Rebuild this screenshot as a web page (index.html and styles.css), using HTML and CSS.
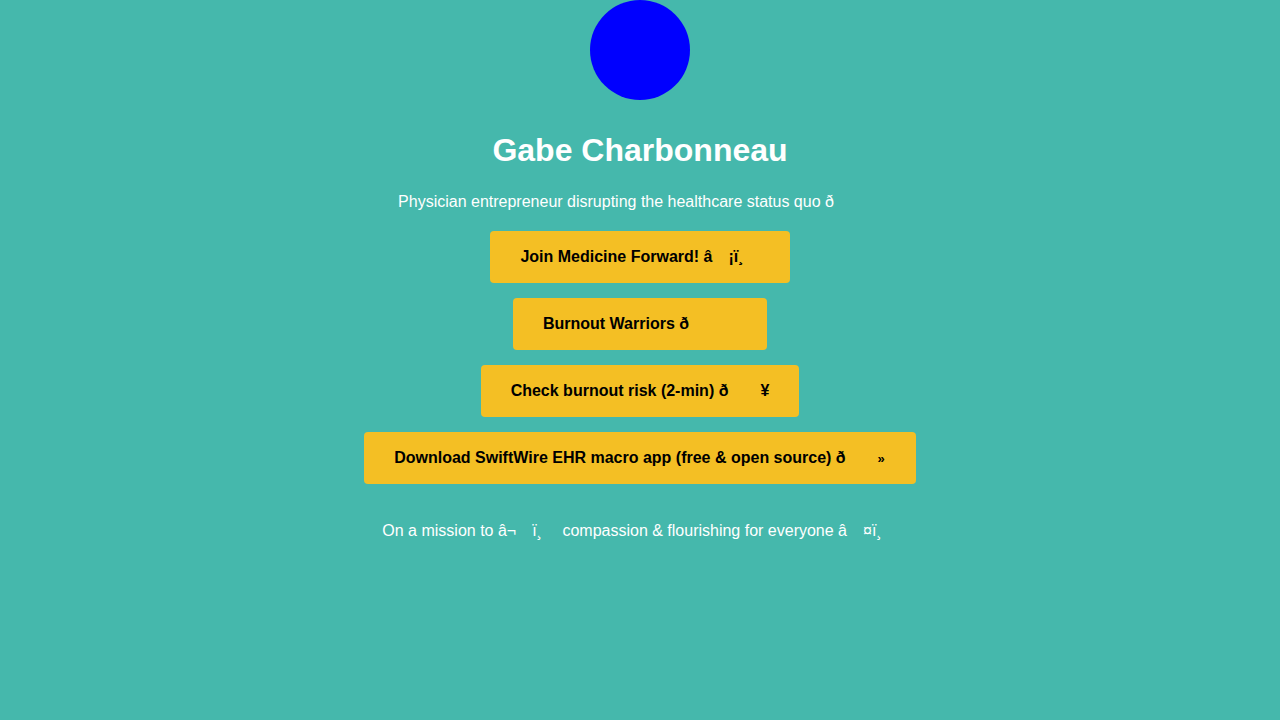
FILE: index.html
```html
<!DOCTYPE html>
<html lang="en">
<head>
<meta charset="utf-8">
<title>Gabe Charbonneau</title>
<link rel="stylesheet" href="styles.css">
</head>
<body>
<main class="page">
  <div class="avatar"></div>
  <h1 class="name">Gabe Charbonneau</h1>
  <p class="bio">Physician entrepreneur disrupting the healthcare status quo ð<span class="ctl"></span><span class="ctl"></span><span class="ctl"></span></p>
  <nav class="links">
    <a class="btn" href="#">Join Medicine Forward! â<span class="ctl"></span>¡ï¸<span class="ctl"></span></a>
    <a class="btn" href="#">Burnout Warriors ð<span class="ctl"></span><span class="ctl"></span><span class="ctl"></span></a>
    <a class="btn" href="#">Check burnout risk (2-min) ð<span class="ctl"></span><span class="ctl"></span>¥</a>
    <a class="btn" href="#">Download SwiftWire EHR macro app (free &amp; open source) ð<span class="ctl"></span><span class="ctl"></span><span class="small">»</span></a>
  </nav>
  <p class="mission">On a mission to â¬<span class="ctl"></span>ï¸<span class="ctl"></span> compassion &amp; flourishing for everyone â<span class="ctl"></span>¤ï¸<span class="ctl"></span></p>
</main>
</body>
</html>
```
FILE: styles.css
```css
html, body {
  margin: 0;
  padding: 0;
  background: #45b8ac;
  min-height: 100%;
}
body {
  font-family: "Liberation Sans", Arial, Helvetica, sans-serif;
  color: #ffffff;
}
.page {
  display: flex;
  flex-direction: column;
  align-items: center;
}
.avatar {
  width: 100px;
  height: 100px;
  border-radius: 50%;
  background: #0000ff;
}
.name {
  margin: 32px 0 0;
  font-size: 32px;
  font-weight: bold;
  line-height: 37px;
}
.bio {
  margin: 24px 0 0;
  font-size: 16px;
  line-height: 18px;
}
.links {
  margin-top: 20px;
  display: flex;
  flex-direction: column;
  align-items: center;
  gap: 15px;
}
.btn {
  display: block;
  height: 52px;
  line-height: 52px;
  padding: 0 30px;
  background: #f4bf24;
  border-radius: 4px;
  color: #000000;
  font-weight: bold;
  font-size: 16px;
  text-decoration: none;
  white-space: nowrap;
}
.ctl {
  display: inline-block;
  width: 16px;
}
.small {
  font-size: 13px;
  margin-right: 1px;
}
.mission {
  margin: 38px 0 0;
  font-size: 16px;
  line-height: 18px;
}
```
